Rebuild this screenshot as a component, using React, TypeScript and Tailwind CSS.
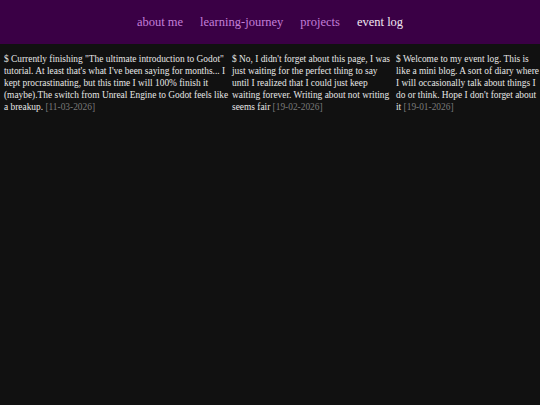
import { memo } from "react";

const entries = [
	{
		text: 'Currently finishing "The ultimate introduction to Godot" tutorial. At least that\'s what I\'ve been saying for months... I kept procrastinating, but this time I will 100% finish it (maybe).The switch from Unreal Engine to Godot feels like a breakup.',
		date: "11-03-2026",
		w: "w-[228px] shrink-0",
	},
	{
		text: "No, I didn't forget about this page, I was just waiting for the perfect thing to say until I realized that I could just keep waiting forever. Writing about not writing seems fair",
		date: "19-02-2026",
		w: "w-[164px] shrink-0 pr-1",
	},
	{
		text: "Welcome to my event log. This is like a mini blog. A sort of diary where I will occasionally talk about things I do or think. Hope I don't forget about it",
		date: "19-01-2026",
		w: "flex-1",
	},
];

const App = () => {
	return (
		<div className="min-h-screen w-full bg-[#111111] font-['Liberation_Serif',serif]">
			{/* Nav */}
			<nav className="h-[44px] bg-[#3a0045] flex items-center justify-center gap-[17px] text-[12.5px] pt-px">
				<a className="text-[#c27fd8]">about me</a>
				<a className="text-[#c27fd8]">learning-journey</a>
				<a className="text-[#c27fd8]">projects</a>
				<a className="text-[#f0e6f2]">event log</a>
			</nav>

			{/* Log entries */}
			<div className="flex pl-1 pt-[9px] text-[9.4px] leading-[12px] text-[#e6e6e6]">
				{entries.map((e) => (
					<p key={e.date} className={e.w}>
						$ {e.text} <span className="text-[#7a7a7a]">[{e.date}]</span>
					</p>
				))}
			</div>
		</div>
	);
};

export default memo(App);
